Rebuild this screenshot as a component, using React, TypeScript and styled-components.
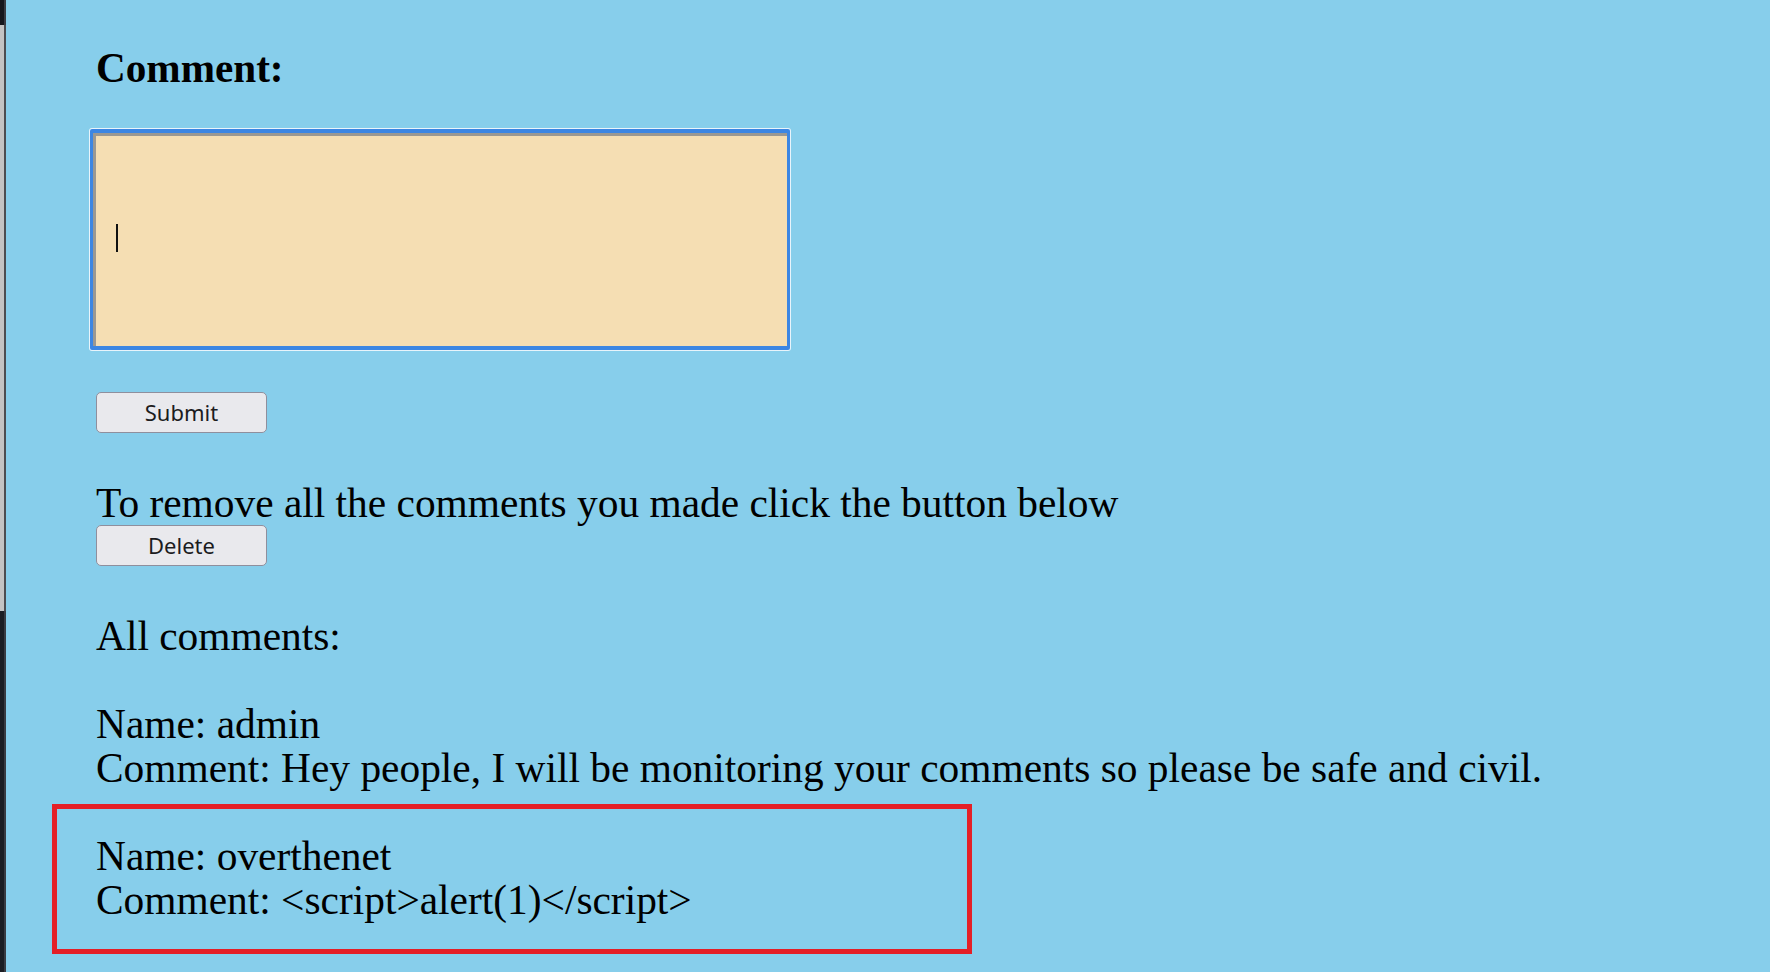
import React from "react";
import styled, { createGlobalStyle } from "styled-components";

const GlobalStyle = createGlobalStyle`
  html, body {
    margin: 0;
    padding: 0;
    height: 100%;
    overflow: hidden;
  }
  body {
    font-family: "Liberation Serif", "Times New Roman", serif;
    color: #000;
  }
`;

const Page = styled.div`
  display: flex;
  width: 100vw;
  height: 100vh;
  overflow: hidden;
`;

const EdgeStrip = styled.div`
  flex: 0 0 6px;
  display: flex;
  flex-direction: column;
`;

const EdgeSegment = styled.div<{ $tone: "dark" | "light" | "shade"; $size?: number }>`
  flex: ${(p) => (p.$size ? `0 0 ${p.$size}px` : "1 1 auto")};
  background: ${(p) =>
    p.$tone === "dark" ? "#16171d" : p.$tone === "shade" ? "#1c1d23" : "#c3c3c3"};
  border-right: 2px solid
    ${(p) => (p.$tone === "light" ? "#4c4c50" : "#3a3b42")};
`;

const Main = styled.main`
  flex: 1 1 auto;
  background: #87ceeb;
  padding: 46px 0 0 90px;
  display: flex;
  flex-direction: column;
  align-items: flex-start;
`;

const Heading = styled.h3`
  margin: 0;
  font-size: 41.2px;
  line-height: 44px;
  font-weight: bold;
`;

const FieldWrap = styled.div`
  position: relative;
  margin: 39px 0 0 -6px;
`;

const CommentBox = styled.textarea`
  display: block;
  box-sizing: border-box;
  width: 700px;
  height: 221px;
  margin: 0;
  padding: 0;
  resize: none;
  background: #f5deb3;
  border: 4px solid #3c86e3;
  border-left-width: 3px;
  border-right-width: 3px;
  border-radius: 2px;
  box-shadow: 0 0 0 1px #e8f4fb, inset 3px 3px 0 #9a9893;
  outline: none;
  caret-color: transparent;
  font-family: "Liberation Mono", monospace;
`;

const Caret = styled.span`
  position: absolute;
  left: 26px;
  top: 95px;
  width: 2px;
  height: 28px;
  background: #111;
`;

const Button = styled.button<{ $gap: number }>`
  box-sizing: border-box;
  width: 171px;
  height: 41px;
  margin-top: ${(p) => p.$gap}px;
  padding: 0;
  background: #e9e9ed;
  border: 1px solid #8f8f9d;
  border-radius: 5px;
  color: #1c1c1e;
  font-family: "Noto Sans", "Open Sans", sans-serif;
  font-size: 22px;
  line-height: 39px;
  cursor: pointer;
`;

const Line = styled.div<{ $gap?: number }>`
  font-size: 41.4px;
  line-height: 44px;
  white-space: nowrap;
  margin-top: ${(p) => p.$gap ?? 0}px;
`;

const Entry = styled.div`
  position: relative;
  padding-top: 44px;
`;

const Highlight = styled.div`
  position: absolute;
  left: -44px;
  top: 14px;
  width: 920px;
  height: 150px;
  box-sizing: border-box;
  border: 5px solid #e41f26;
  pointer-events: none;
`;

type CommentItem = { name: string; text: string; flagged?: boolean };

const comments: CommentItem[] = [
  {
    name: "admin",
    text: "Hey people, I will be monitoring your comments so please be safe and civil.",
  },
  { name: "overthenet", text: "<script>alert(1)</script>", flagged: true },
];

export default function App() {
  return (
    <>
      <GlobalStyle />
      <Page>
        <EdgeStrip>
          <EdgeSegment $tone="dark" $size={25} />
          <EdgeSegment $tone="light" $size={586} />
          <EdgeSegment $tone="shade" />
        </EdgeStrip>
        <Main>
          <Heading>Comment:</Heading>
          <FieldWrap>
            <CommentBox aria-label="Comment" />
            <Caret />
          </FieldWrap>
          <Button $gap={42}>Submit</Button>
          <Line $gap={48}>To remove all the comments you made click the button below</Line>
          <Button $gap={0}>Delete</Button>
          <Line $gap={48}>All comments:</Line>
          {comments.map((c) => (
            <Entry key={c.name}>
              {c.flagged && <Highlight />}
              <Line>Name: {c.name}</Line>
              <Line>Comment: {c.text}</Line>
            </Entry>
          ))}
        </Main>
      </Page>
    </>
  );
}
